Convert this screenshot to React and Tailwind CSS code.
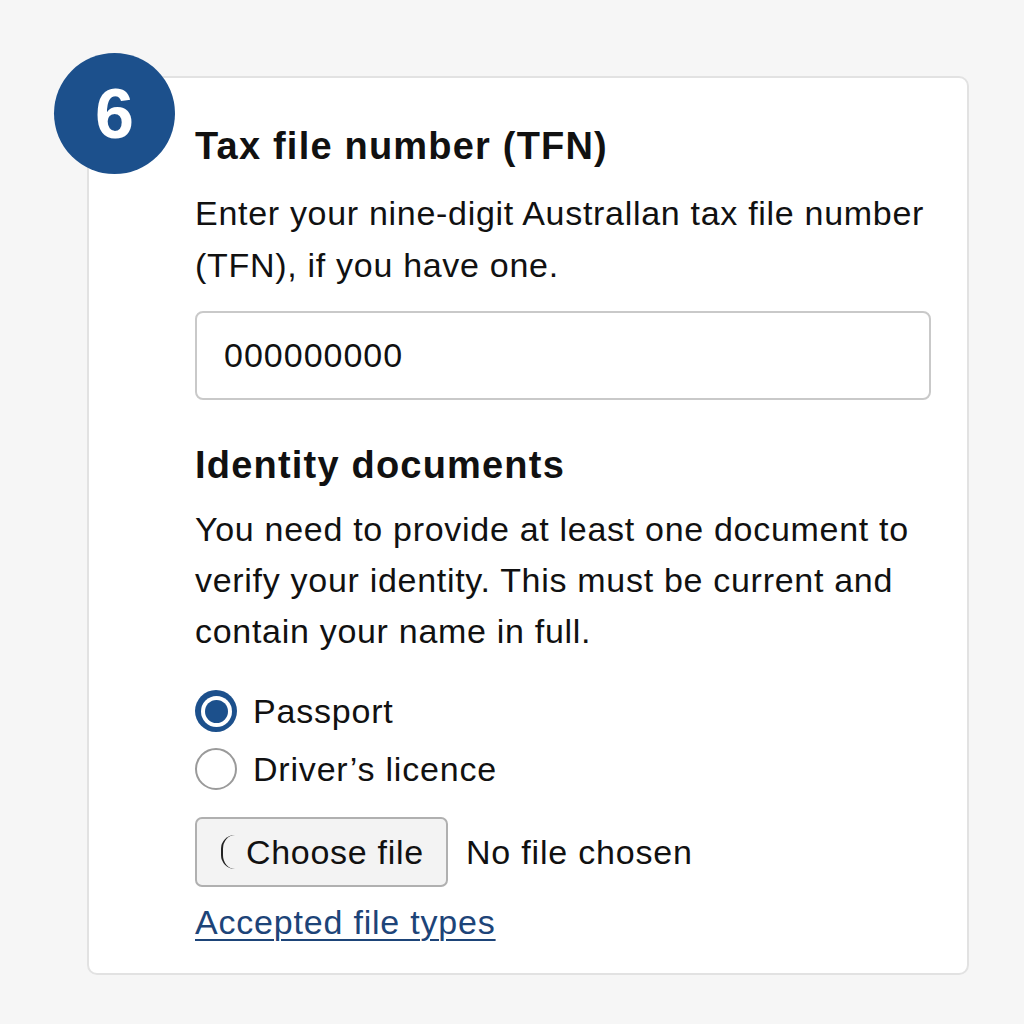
import React, { useState } from 'react';

const Radio = ({ checked, label, onClick }) => (
  <label className="flex items-center gap-[16px] cursor-pointer" onClick={onClick}>
    {checked ? (
      <span className="w-[42px] h-[42px] rounded-full bg-[#1c508c] flex items-center justify-center">
        <span className="w-[31px] h-[31px] rounded-full bg-white flex items-center justify-center">
          <span className="w-[23px] h-[23px] rounded-full bg-[#1c508c]" />
        </span>
      </span>
    ) : (
      <span className="w-[42px] h-[42px] rounded-full border-[2px] border-[#9a9a9a] bg-white" />
    )}
    <span className="text-[34px] tracking-[0.8px] leading-[42px] text-[#111]">{label}</span>
  </label>
);

const App = () => {
  const [doc, setDoc] = useState('passport');

  return (
    <div
      className="min-h-screen bg-[#f6f6f6] pt-[76px] pl-[87px]"
      style={{ fontFamily: '"Liberation Sans", Arial, sans-serif' }}
    >
      <div className="relative w-[882px] h-[899px] bg-white border-[2px] border-[#e2e2e2] rounded-[10px] pl-[106px] pr-[14px] pt-[42px]">
        {/* step badge */}
        <div className="absolute left-[-35px] top-[-25px] w-[121px] h-[121px] rounded-full bg-[#1c508c] flex items-center justify-center">
          <span className="text-white text-[70px] font-bold leading-none">6</span>
        </div>

        <h2 className="text-[38px] font-bold tracking-[1.2px] text-[#111] leading-[52px]">Tax file number (TFN)</h2>
        <p className="mt-[15px] w-[750px] text-[34px] tracking-[0.7px] text-[#111] leading-[52px]">
          Enter your nine-digit Australlan tax file number (TFN), if you have one.
        </p>

        <div className="mt-[20px] w-[736px] h-[89px] border-[2px] border-[#c9c9c9] rounded-[8px] flex items-center px-[27px]">
          <span className="text-[34px] text-[#111] tracking-[1px]">000000000</span>
        </div>

        <h2 className="mt-[39px] text-[38px] font-bold tracking-[1.2px] text-[#111] leading-[52px]">Identity documents</h2>
        <p className="mt-[13px] w-[750px] text-[34px] tracking-[0.7px] text-[#111] leading-[51px]">
          You need to provide at least one document to verify your identity. This must be current and contain your name in full.
        </p>

        <div className="mt-[33px] flex flex-col gap-[16px]">
          <Radio checked={doc === 'passport'} label="Passport" onClick={() => setDoc('passport')} />
          <Radio checked={doc === 'licence'} label="Driver’s licence" onClick={() => setDoc('licence')} />
        </div>

        <div className="mt-[27px] flex items-center gap-[18px]">
          <button className="w-[253px] h-[70px] bg-[#f3f3f3] border-[2px] border-[#b0b0b0] rounded-[7px] flex items-center pl-[24px] gap-[11px] text-[34px] tracking-[0.7px] text-[#111]">
            <span className="w-[14px] h-[34px] border-l-[2px] border-[#222] rounded-l-full" />
            <span>Choose file</span>
          </button>
          <span className="text-[34px] tracking-[0.8px] text-[#111]">No file chosen</span>
        </div>

        <a href="#" className="mt-[15px] inline-block text-[34px] tracking-[0.8px] leading-[40px] text-[#1d4478] underline underline-offset-[5px] decoration-[2px]">
          Accepted file types
        </a>
      </div>
    </div>
  );
};

export default App;
